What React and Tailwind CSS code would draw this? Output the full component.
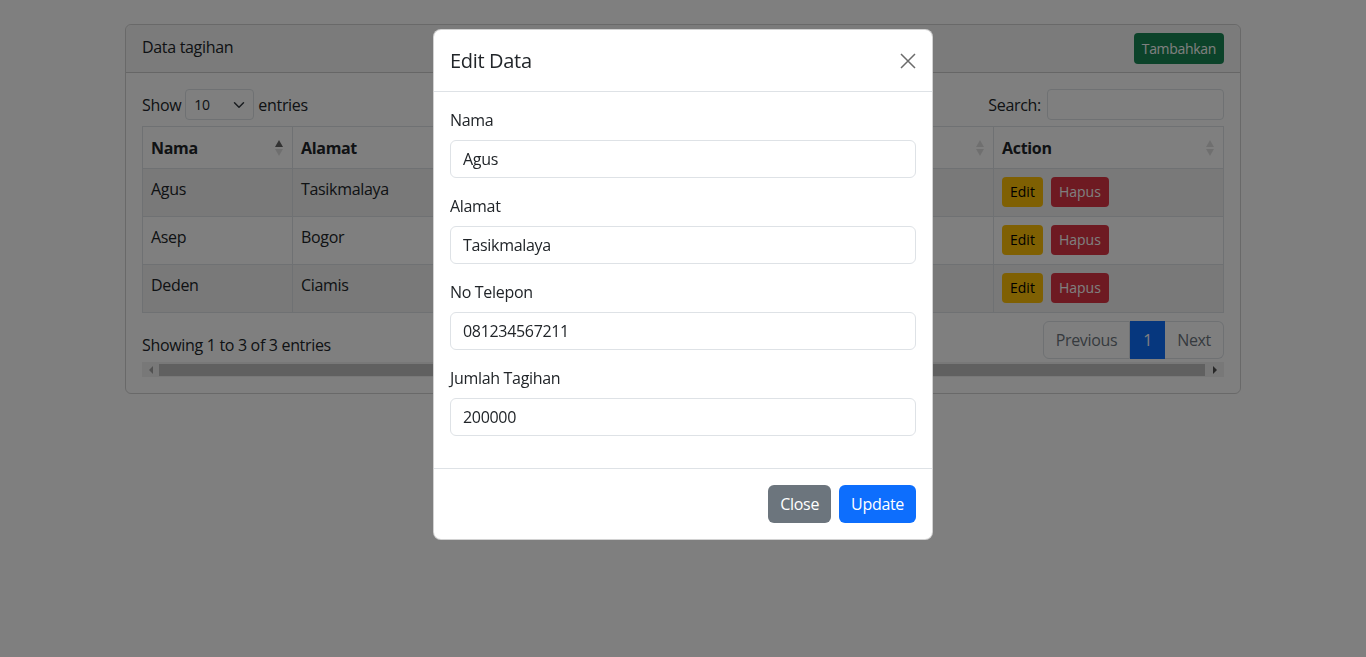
import React from "react";

const rows = [
  { nama: "Agus", alamat: "Tasikmalaya", telp: "081234567211", jumlah: "200000" },
  { nama: "Asep", alamat: "Bogor", telp: "081234567890", jumlah: "150000" },
  { nama: "Deden", alamat: "Ciamis", telp: "085712345678", jumlah: "300000" },
];

function SortIcon({ active }) {
  return (
    <svg width="10" height="18" viewBox="0 0 10 18" className="shrink-0">
      <polygon points="5,1 9,8 1,8" fill="#000" opacity={active ? 0.6 : 0.125} />
      <polygon points="5,17 9,10 1,10" fill="#000" opacity="0.125" />
    </svg>
  );
}

function Field({ label, value }) {
  return (
    <div className="mb-4">
      <label className="block mb-2 leading-6 text-[#212529]">{label}</label>
      <input
        defaultValue={value}
        className="w-full h-[38px] px-3 border border-[#dee2e6] rounded-[6px] text-[#212529] outline-none"
      />
    </div>
  );
}

export default function App() {
  return (
    <div
      className="min-h-screen bg-white text-[#212529] text-base tracking-[-0.02em]"
      style={{ fontFamily: "'Open Sans', sans-serif" }}
    >
      {/* CARD */}
      <div className="w-[1116px] ml-[125px] pt-6">
        <div className="border border-black/[0.175] rounded-[6px]">
          <div className="flex justify-between items-center px-4 h-[48px] bg-black/[0.03] border-b border-black/[0.175] rounded-t-[6px]">
            <span className="-mt-1">Data tagihan</span>
            <button className="bg-[#198754] text-white text-sm h-[31px] px-2 rounded-[4px]">Tambahkan</button>
          </div>

          <div className="p-4">
            <div className="flex justify-between items-center">
              <div className="flex items-center gap-1">
                <span>Show</span>
                <div className="flex items-center justify-between w-[69px] h-[31px] border border-[#dee2e6] rounded-[4px] pl-2 pr-2 text-sm">
                  <span>10</span>
                  <svg width="12" height="12" viewBox="0 0 16 16">
                    <path d="M2 5l6 6 6-6" fill="none" stroke="#343a40" strokeWidth="2" strokeLinecap="round" strokeLinejoin="round" />
                  </svg>
                </div>
                <span>entries</span>
              </div>
              <div className="flex items-center gap-[6px]">
                <span>Search:</span>
                <div className="w-[177px] h-[31px] border border-[#dee2e6] rounded-[4px]"></div>
              </div>
            </div>

            <table className="w-full mt-[6px] border-collapse">
              <thead>
                <tr className="h-[42px]">
                  {[
                    ["Nama", "w-[150px]", true],
                    ["Alamat", "w-[228px]", false],
                    ["No Telepon", "w-[240px]", false],
                    ["Jumlah Tagihan", "w-[233px]", false],
                    ["Action", "", false],
                  ].map(([t, w, a]) => (
                    <th key={t} className={`${w} border border-[#dee2e6] px-2 text-left font-bold`}>
                      <div className="flex items-center justify-between">
                        <span>{t}</span>
                        <SortIcon active={a} />
                      </div>
                    </th>
                  ))}
                </tr>
              </thead>
              <tbody>
                {rows.map((r, i) => (
                  <tr key={r.nama} className={`h-[48px] ${i % 2 === 0 ? "bg-black/[0.05]" : ""}`}>
                    <td className="border border-[#dee2e6] px-2 pt-2 align-top leading-6">{r.nama}</td>
                    <td className="border border-[#dee2e6] px-2 pt-2 align-top leading-6">{r.alamat}</td>
                    <td className="border border-[#dee2e6] px-2 pt-2 align-top leading-6">{r.telp}</td>
                    <td className="border border-[#dee2e6] px-2 pt-2 align-top leading-6">{r.jumlah}</td>
                    <td className="border border-[#dee2e6] px-2 pt-2 align-top">
                      <div className="flex gap-2 tracking-normal">
                        <button className="bg-[#ffc107] text-black text-sm h-[30px] px-2 rounded-[4px]">Edit</button>
                        <button className="bg-[#dc3545] text-white text-sm h-[30px] px-2 rounded-[4px]">Hapus</button>
                      </div>
                    </td>
                  </tr>
                ))}
              </tbody>
            </table>

            <div className="flex justify-between items-start mt-2">
              <span className="pt-3 leading-6">Showing 1 to 3 of 3 entries</span>
              <div className="flex h-[38px]">
                <span className="flex items-center px-3 border border-[#dee2e6] rounded-l-[6px] text-[#6c757d]">Previous</span>
                <span className="flex items-center px-3 bg-[#0d6efd] border border-[#0d6efd] text-white">1</span>
                <span className="flex items-center px-3 border border-[#dee2e6] border-l-0 rounded-r-[6px] text-[#6c757d]">Next</span>
              </div>
            </div>

            {/* scrollbar */}
            <div className="flex items-center h-[15px] mt-[3px] bg-[#f1f1f1]">
              <div className="w-[17px] flex justify-center">
                <svg width="6" height="8" viewBox="0 0 6 8"><polygon points="5,0 5,8 1,4" fill="#a3a3a3" /></svg>
              </div>
              <div className="flex-1 h-[12px] bg-[#c1c1c1]"></div>
              <div className="w-[19px] flex justify-center">
                <svg width="6" height="8" viewBox="0 0 6 8"><polygon points="1,0 1,8 5,4" fill="#505050" /></svg>
              </div>
            </div>
          </div>
        </div>
      </div>

      {/* BACKDROP */}
      <div className="fixed inset-0 bg-black/50"></div>

      {/* MODAL */}
      <div className="fixed inset-0 flex justify-center pt-[29px]">
        <div className="w-[500px] h-fit bg-white border border-black/[0.175] rounded-[8px]">
          <div className="flex items-center justify-between px-4 h-[62px] border-b border-[#dee2e6]">
            <h5 className="text-xl font-medium leading-[30px]">Edit Data</h5>
            <svg width="16" height="16" viewBox="0 0 16 16">
              <path d="M1 1l14 14M15 1L1 15" stroke="#6b6b6b" strokeWidth="1.5" />
            </svg>
          </div>
          <div className="p-4">
            <Field label="Nama" value="Agus" />
            <Field label="Alamat" value="Tasikmalaya" />
            <Field label="No Telepon" value="081234567211" />
            <Field label="Jumlah Tagihan" value="200000" />
          </div>
          <div className="flex justify-end gap-2 px-4 pt-4 pb-4 border-t border-[#dee2e6]">
            <button className="bg-[#6c757d] text-white h-[38px] px-3 rounded-[6px]">Close</button>
            <button className="bg-[#0d6efd] text-white h-[38px] px-3 rounded-[6px]">Update</button>
          </div>
        </div>
      </div>
    </div>
  );
}
